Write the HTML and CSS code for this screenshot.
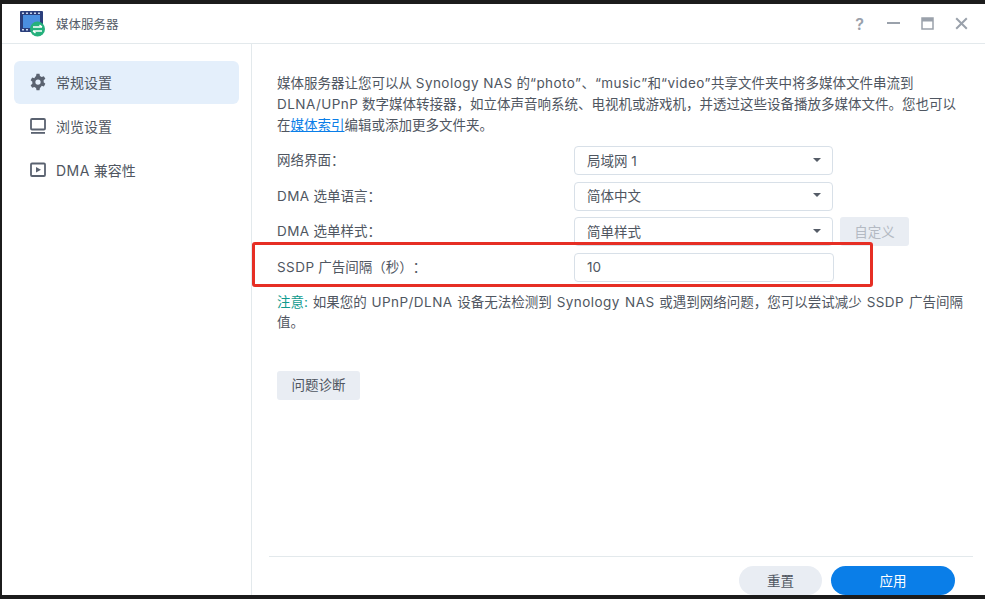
FILE: index.html
```html
<!DOCTYPE html>
<html lang="zh-CN">
<head>
<meta charset="utf-8">
<title>媒体服务器</title>
<link rel="stylesheet" href="styles.css">
</head>
<body>
<div class="window">
  <header class="titlebar">
    <svg class="app-icon" width="26" height="26" viewBox="0 0 26 26">
      <rect x="0" y="0" width="23" height="21" rx="1" fill="#2b3f7c"/>
      <rect x="3" y="4" width="17" height="13" fill="#4a8fe0"/>
      <g fill="#c7d6ee"><rect x="2" y="1.5" width="2" height="1.5"/><rect x="6" y="1.5" width="2" height="1.5"/><rect x="10" y="1.5" width="2" height="1.5"/><rect x="14" y="1.5" width="2" height="1.5"/><rect x="18" y="1.5" width="2" height="1.5"/><rect x="2" y="18" width="2" height="1.5"/><rect x="6" y="18" width="2" height="1.5"/></g>
      <circle cx="17.500" cy="18" r="7.500" fill="#25b07c"/>
      <path d="M13 16h9M19.500 14l2.500 2M22 20h-9M15.500 22L13 20" stroke="#fff" stroke-width="1.400" fill="none"/>
    </svg>
    <span class="app-title">媒体服务器</span>
    <div class="win-controls">
      <span class="help">?</span>
      <svg width="13" height="13" viewBox="0 0 13 13"><rect x="0" y="5" width="13" height="2" fill="#9aa1ab"/></svg>
      <svg width="13" height="13" viewBox="0 0 13 13"><path d="M1 1h11v11H1z" fill="none" stroke="#9aa1ab" stroke-width="1.5"/><rect x="1" y="1" width="11" height="3.5" fill="#9aa1ab"/></svg>
      <svg width="13" height="13" viewBox="0 0 13 13"><path d="M1.2 1.2l10.6 10.6M11.8 1.2L1.2 11.8" stroke="#9aa1ab" stroke-width="2" fill="none"/></svg>
    </div>
  </header>
  <div class="body">
    <nav class="sidebar">
      <a class="nav-item active">
        <svg width="18" height="18" viewBox="0 0 24 24"><path fill="#5a6270" fill-rule="evenodd" d="M10 1h4l.6 3a8.5 8.5 0 0 1 2.3 1.3l2.9-1 2 3.5-2.3 2a8.5 8.5 0 0 1 0 2.6l2.3 2-2 3.5-2.9-1A8.5 8.5 0 0 1 14.600 20l-.6 3h-4l-.6-3a8.500 8.500 0 0 1-2.300-1.300l-2.900 1-2-3.500 2.300-2a8.500 8.500 0 0 1 0-2.600l-2.300-2 2-3.500 2.900 1A8.500 8.500 0 0 1 9.400 4zM12 8.500a3.500 3.500 0 1 0 0 7 3.500 3.500 0 0 0 0-7z"/></svg>
        <span>常规设置</span>
      </a>
      <a class="nav-item">
        <svg width="18" height="18" viewBox="0 0 18 18"><rect x="2" y="2" width="14" height="10.500" rx="1" fill="none" stroke="#5a6270" stroke-width="1.800"/><rect x="2" y="15" width="14" height="1.800" fill="#5a6270"/></svg>
        <span>浏览设置</span>
      </a>
      <a class="nav-item">
        <svg width="18" height="18" viewBox="0 0 18 18"><rect x="2" y="2.500" width="14" height="12.500" rx="1" fill="none" stroke="#5a6270" stroke-width="1.800"/><path d="M7 6l5 2.800-5 2.800z" fill="#5a6270"/></svg>
        <span><span class="la">DMA</span> 兼容性</span>
      </a>
    </nav>
    <main class="content">
      <div class="pane">
        <p class="intro">媒体服务器让您可以从 <span class="la">Synology NAS</span> 的<span class="la">“photo”</span>、<span class="la">“music”</span>和<span class="la">“video”</span>共享文件夹中将多媒体文件串流到 <span class="la">DLNA/UPnP</span> 数字媒体转接器，如立体声音响系统、电视机或游戏机，并透过这些设备播放多媒体文件。您也可以在<a class="link">媒体索引</a>编辑或添加更多文件夹。</p>
        <div class="form">
          <div class="row"><label>网络界面：</label><div class="select"><span>局域网 1</span><i class="caret"></i></div></div>
          <div class="row"><label><span class="la">DMA</span> 选单语言：</label><div class="select"><span>简体中文</span><i class="caret"></i></div></div>
          <div class="row"><label><span class="la">DMA</span> 选单样式：</label><div class="select"><span>简单样式</span><i class="caret"></i></div><button class="btn disabled">自定义</button></div>
          <div class="row"><label><span class="la">SSDP</span> 广告间隔（秒）：</label><div class="input">10</div></div>
          <div class="highlight"></div>
        </div>
        <p class="note"><span class="note-key">注意:</span> 如果您的 <span class="la">UPnP/DLNA</span> 设备无法检测到 <span class="la">Synology NAS</span> 或遇到网络问题，您可以尝试减少 <span class="la">SSDP</span> 广告间隔值。</p>
        <button class="btn diag">问题诊断</button>
      </div>
      <footer class="footer">
        <button class="pill reset">重置</button>
        <button class="pill apply">应用</button>
      </footer>
    </main>
  </div>
</div>
</body>
</html>
```

FILE: styles.css
```css
* { box-sizing: border-box; }
html, body { margin: 0; height: 100%; }
body {
  background: #1c1c1c;
  padding: 4px 0 4px 2px;
  overflow: hidden;
  font-family: Inter, "Noto Sans CJK SC", sans-serif;
  font-size: 13.5px;
  color: #4f5661;
  text-spacing-trim: space-all;
}
.la { letter-spacing: 0.45px; }
.window { height: 591px; background: #fff; display: flex; flex-direction: column; }
.titlebar {
  height: 40px;
  flex: none;
  border-bottom: 1px solid #e3e9ec;
  display: flex;
  align-items: center;
  padding-left: 18px;
}
.app-icon { margin-right: 10px; flex: none; }
.app-title { font-size: 12.5px; color: #555c67; }
.win-controls { margin-left: auto; margin-right: 17px; display: flex; align-items: center; gap: 21px; }
.help { font-size: 16px; font-weight: 600; color: #9aa1ab; width: 13px; text-align: center; line-height: 20px; }
.body { flex: 1; display: flex; min-height: 0; }
.sidebar {
  width: 250px;
  flex: none;
  border-right: 1px solid #e3e9ec;
  padding: 17px 12px 0;
  display: flex;
  flex-direction: column;
  gap: 1px;
}
.nav-item {
  height: 43px;
  border-radius: 6px;
  display: flex;
  align-items: center;
  gap: 9px;
  padding: 0 0 2px 15px;
  font-size: 14px;
  color: #4f5661;
}
.nav-item.active { background: #e4effb; }
.content { flex: 1; display: flex; flex-direction: column; min-width: 0; padding-left: 17px; padding-right: 12px; }
.pane { flex: 1; padding: 29px 8px 0 8px; }
.intro { margin: 0 0 10px; line-height: 21px; }
.link { color: #0a7ee8; text-decoration: underline; }
.form { position: relative; display: flex; flex-direction: column; gap: 6.5px; }
.row { display: flex; align-items: center; height: 29px; }
.row label { width: 297px; flex: none; padding-bottom: 3px; }
.select, .input {
  width: 259px;
  height: 29px;
  border: 1px solid #d8e0e8;
  border-radius: 4px;
  display: flex;
  align-items: center;
  justify-content: space-between;
  padding: 0 11px 2px 12px;
  background: #fff;
}
.input { width: 260px; padding-bottom: 0; }
.caret { width: 0; height: 0; border-left: 4.5px solid transparent; border-right: 4.5px solid transparent; border-top: 4.5px solid #555c67; }
.btn {
  border: 0;
  border-radius: 3px;
  height: 29px;
  background: #e9edf3;
  color: #4f5661;
  font: inherit;
  padding: 0 0 2px;
}
.btn.disabled { width: 69px; margin-left: 7px; color: #b4bac3; }
.highlight {
  position: absolute;
  left: -25px;
  top: 96px;
  width: 621px;
  height: 45px;
  border: 3px solid #e62e24;
  border-radius: 3px;
}
.note { margin: 10px 0 0; line-height: 20px; word-spacing: 1px; }
.note-key { color: #0f9a8e; }
.diag { display: block; width: 83px; margin-top: 39px; }
.footer {
  height: 39px;
  flex: none;
  border-top: 1px solid #e3e9ec;
  display: flex;
  justify-content: flex-end;
  gap: 9px;
  padding: 9px 18px 0 0;
}
.pill { height: 29px; border: 0; border-radius: 15px; font: inherit; padding: 0 0 2px; }
.reset { width: 83px; background: #e9edf3; color: #4f5661; }
.apply { width: 124px; background: #0a7ee8; color: #fff; }
```
